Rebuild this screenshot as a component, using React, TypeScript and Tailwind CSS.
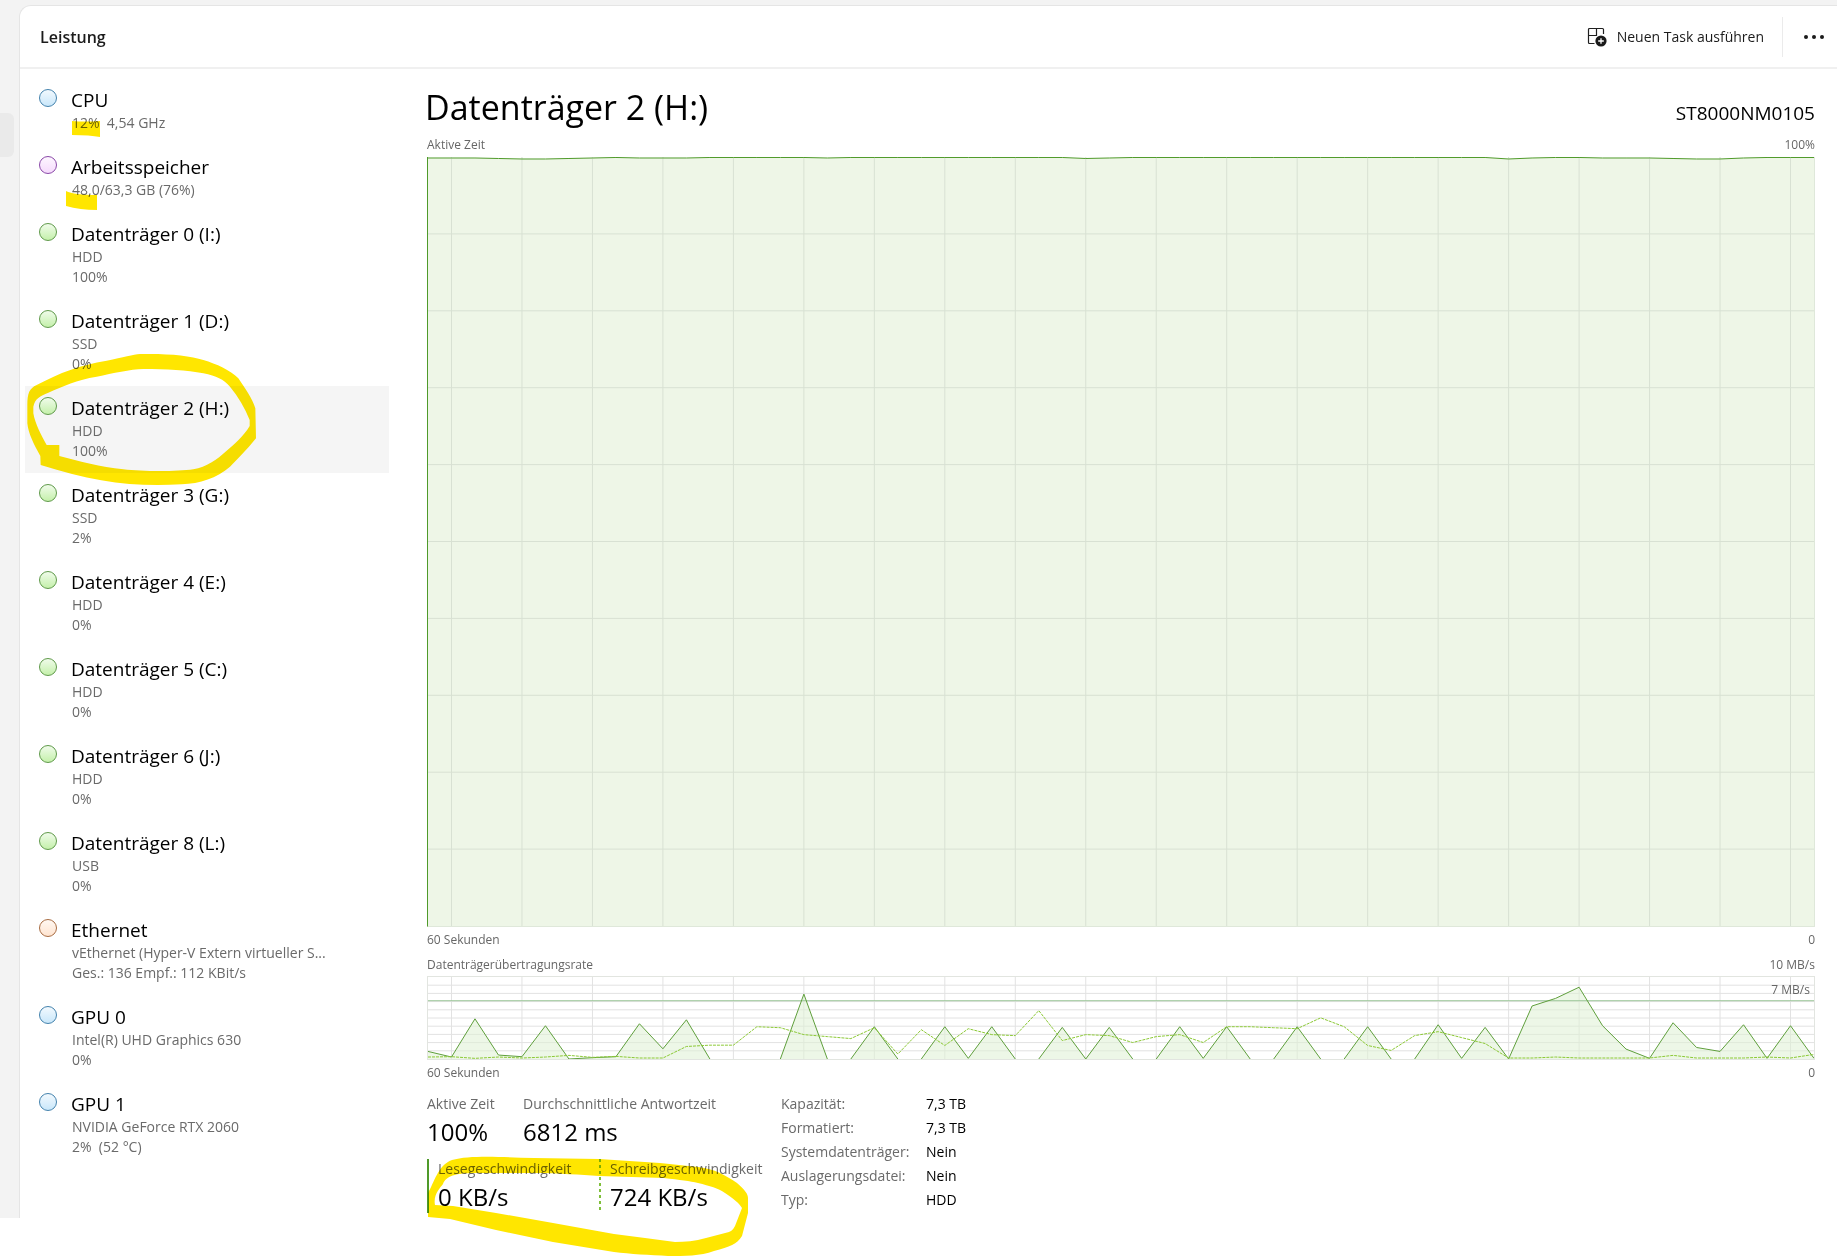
import clsx from 'clsx';

type Tone = 'blue' | 'purple' | 'green' | 'orange';

interface Resource {
  name: string;
  lines: string[];
  tone: Tone;
  selected?: boolean;
  mark?: 'cpu' | 'memory';
}

const resources: Resource[] = [
  { name: 'CPU', lines: ['12%  4,54 GHz'], tone: 'blue', mark: 'cpu' },
  { name: 'Arbeitsspeicher', lines: ['48,0/63,3 GB (76%)'], tone: 'purple', mark: 'memory' },
  { name: 'Datenträger 0 (I:)', lines: ['HDD', '100%'], tone: 'green' },
  { name: 'Datenträger 1 (D:)', lines: ['SSD', '0%'], tone: 'green' },
  { name: 'Datenträger 2 (H:)', lines: ['HDD', '100%'], tone: 'green', selected: true },
  { name: 'Datenträger 3 (G:)', lines: ['SSD', '2%'], tone: 'green' },
  { name: 'Datenträger 4 (E:)', lines: ['HDD', '0%'], tone: 'green' },
  { name: 'Datenträger 5 (C:)', lines: ['HDD', '0%'], tone: 'green' },
  { name: 'Datenträger 6 (J:)', lines: ['HDD', '0%'], tone: 'green' },
  { name: 'Datenträger 8 (L:)', lines: ['USB', '0%'], tone: 'green' },
  {
    name: 'Ethernet',
    lines: ['vEthernet (Hyper-V Extern virtueller S...', 'Ges.: 136 Empf.: 112 KBit/s'],
    tone: 'orange',
  },
  { name: 'GPU 0', lines: ['Intel(R) UHD Graphics 630', '0%'], tone: 'blue' },
  { name: 'GPU 1', lines: ['NVIDIA GeForce RTX 2060', '2%  (52 °C)'], tone: 'blue' },
];

const dotTones: Record<Tone, string> = {
  blue: 'border-[#4382ad] from-[#f2f9fe] to-[#c9e7fa]',
  purple: 'border-[#8a48a8] from-[#fdf6ff] to-[#f5dafc]',
  green: 'border-[#5f9a4a] from-[#f0fbea] to-[#c4f0aa]',
  orange: 'border-[#a86c42] from-[#fff8f2] to-[#ffe4d0]',
};

const details = [
  ['Kapazität:', '7,3 TB'],
  ['Formatiert:', '7,3 TB'],
  ['Systemdatenträger:', 'Nein'],
  ['Auslagerungsdatei:', 'Nein'],
  ['Typ:', 'HDD'],
];

// one sample per second, last 60 seconds
const LAST = 59;
const SCALE = 249;

const activeTime = [
  1, 1, 1, 1.5, 2, 2, 1.5, 1, 0.5, 1, 1, 1, 0.5, 0.5, 0.5, 0.5, 0.5, 1, 0.5, 0.5,
  0.5, 0.5, 0.5, 0.5, 0.5, 0.5, 0.5, 0.5, 1.5, 1, 0.5, 0.5, 0.5, 0.5, 0.5, 0.5, 0.5, 0.5, 0.5, 0.5,
  0.5, 0.5, 0.5, 0.5, 0.5, 0.5, 2, 1, 0.5, 0.5, 1, 1, 1, 1.5, 2, 2, 1, 0.5, 0.5, 0.5,
];

const readRate = [
  23, 6, 122, 12, 7, 101, 0, 4, 7, 107, 31, 119, 0, 0, 0, 0, 197, 0, 0, 98,
  0, 0, 98, 2, 98, 0, 0, 96, 0, 96, 0, 0, 98, 2, 98, 0, 0, 98, 0, 0,
  98, 0, 0, 104, 2, 96, 0, 161, 184, 218, 101, 30, 2, 110, 35, 23, 104, 2, 101, 2,
];

const writeRate = [
  6, 7, 2, 6, 3, 6, 11, 5, 8, 3, 3, 38, 42, 42, 98, 95, 74, 68, 62, 95,
  15, 89, 41, 92, 74, 71, 147, 56, 74, 71, 50, 68, 74, 50, 98, 98, 95, 92, 125, 98,
  41, 26, 71, 83, 65, 47, 3, 3, 6, 3, 3, 3, 3, 11, 3, 3, 3, 6, 3, 14,
];

const columns = Array.from({ length: 20 }, (_, i) => 1 + i * 3);
const rows = Array.from({ length: 9 }, (_, i) => i + 1);

// skips the stretches where the rate stays at zero
function linePath(values: number[]) {
  return values
    .slice(1)
    .map((v, i) => (v || values[i] ? `M${i} ${SCALE - values[i]}L${i + 1} ${SCALE - v}` : ''))
    .join('');
}

function Grid({ height, className }: { height: number; className: string }) {
  return (
    <g className={className}>
      {columns.map((x) => (
        <line key={x} x1={x} x2={x} y1={0} y2={height} vectorEffect="non-scaling-stroke" />
      ))}
      {rows.map((r) => (
        <line key={r} x1={0} x2={LAST} y1={(r * height) / 10} y2={(r * height) / 10} vectorEffect="non-scaling-stroke" />
      ))}
    </g>
  );
}

function ActiveTimeChart() {
  const points = activeTime.map((v, i) => `${i},${v}`).join(' ');
  return (
    <svg
      viewBox="0 0 59 770"
      preserveAspectRatio="none"
      className="block h-[770px] w-full border-r border-b border-l border-r-[#dfe8da] border-b-[#dfe8da] border-l-[#4f9a2a]"
    >
      <polygon points={`0,770 ${points} 59,770`} className="fill-[#eef6e7]" />
      <Grid height={770} className="stroke-[#d8e1d3]" />
      <polyline points={points} className="fill-none stroke-[#4f9a2a]" vectorEffect="non-scaling-stroke" />
    </svg>
  );
}

function TransferChart() {
  return (
    <div className="relative">
      <svg
        viewBox="0 0 59 249"
        preserveAspectRatio="none"
        className="block h-[84px] w-full border border-[#e2e5e0]"
      >
        <Grid height={SCALE} className="stroke-[#e2e2e2]" />
        <polygon
          points={`0,249 ${readRate.map((v, i) => `${i},${SCALE - v}`).join(' ')} 59,249`}
          className="fill-[#dff0d4]/55"
        />
        <line x1={0} x2={59} y1={72} y2={72} className="stroke-[#9cc79a]" vectorEffect="non-scaling-stroke" />
        <path d={linePath(readRate)} className="fill-none stroke-[#5f9f3c]" vectorEffect="non-scaling-stroke" />
        <path
          d={`M${writeRate.map((v, i) => `${i} ${SCALE - v}`).join('L')}`}
          className="fill-none stroke-[#8cc936]"
          strokeDasharray="3 1"
          vectorEffect="non-scaling-stroke"
        />
      </svg>
      <span className="absolute top-[5px] right-[5px] text-xs leading-[18px] text-[#666666]">7 MB/s</span>
    </div>
  );
}

function ChartCaption({ left, right }: { left: string; right: string }) {
  return (
    <div className="flex justify-between text-xs leading-[18px] text-[#666666]">
      <span>{left}</span>
      <span>{right}</span>
    </div>
  );
}

function Marker({ viewBox, d, className }: { viewBox: string; d: string; className: string }) {
  return (
    <svg
      viewBox={viewBox}
      className={clsx('pointer-events-none absolute overflow-visible mix-blend-multiply', className)}
      aria-hidden="true"
    >
      <path d={d} fillRule="evenodd" className="fill-[#ffe600]" />
    </svg>
  );
}

function ResourceRow({ name, lines, tone, selected, mark }: Resource) {
  return (
    <li className="relative">
      <button
        type="button"
        className={clsx('flex w-full gap-[14px] pt-[10px] pb-3 pl-[14px] text-left', selected && 'bg-[#f5f5f5]')}
      >
        <span className={clsx('mt-px size-[18px] shrink-0 rounded-full border bg-linear-to-b', dotTones[tone])} />
        <span className="min-w-0">
          <span className="block text-[19px] leading-[25px] text-black">{name}</span>
          {lines.map((line) => (
            <span key={line} className="block pl-px text-sm leading-5 whitespace-pre text-[#6a6a6a]">
              {line}
            </span>
          ))}
        </span>
      </button>
      {mark === 'cpu' && (
        <Marker
          viewBox="0 0 28 17"
          className="top-[42px] left-[47px] h-[17px] w-[28px]"
          d="M0 1Q13 2 28 1V17Q18 15 0 15Z"
        />
      )}
      {mark === 'memory' && (
        <Marker
          viewBox="0 0 32 19"
          className="top-[46px] left-[41px] h-[19px] w-8"
          d="M0 0Q8 4 31 4V19Q14 19 0 15Z"
        />
      )}
      {selected && (
        <Marker
          viewBox="75 288 720 261"
          className="top-0 left-0 h-[87px] w-[240px]"
          d="M82 345C82 310 88 295 110 285C180 248 240 225 320 212C370 202 400 193 420 192C500 190 570 196 610 210C650 222 690 240 715 265C735 295 757 325 766 355L768 445C740 480 710 510 690 530C650 565 600 580 545 583C400 592 280 575 122 525L121 498C100 460 85 430 82 400ZM100 350C105 325 120 318 145 308C190 288 230 270 290 260C340 250 390 238 430 237C500 237 560 240 610 250C650 258 670 268 690 290C715 320 735 355 749 390V408C730 440 700 465 680 482C650 510 620 530 580 538C530 545 430 545 370 538C300 530 240 515 178 498V465L140 465C125 440 105 400 100 370Z"
        />
      )}
    </li>
  );
}

function Stat({ label, value }: { label: string; value: string }) {
  return (
    <div>
      <dt className="text-sm leading-5 whitespace-nowrap text-[#6a6a6a]">{label}</dt>
      <dd className="mt-[2px] text-2xl leading-8 whitespace-nowrap text-black">{value}</dd>
    </div>
  );
}

function NewTaskIcon() {
  return (
    <svg viewBox="0 0 20 20" className="size-5" fill="none" aria-hidden="true">
      <path
        d="M7.5 16.5H2.5A1 1 0 0 1 1.5 15.5V2.5A1 1 0 0 1 2.5 1.5H15.5A1 1 0 0 1 16.5 2.5V7M1.5 8.5H9.5V1.5"
        stroke="#1f1f1f"
        strokeWidth="1.2"
      />
      <circle cx="14" cy="14" r="5.6" fill="#1a1a1a" />
      <path d="M14 11.2V16.8M11.2 14H16.8" stroke="#fff" strokeWidth="1.3" />
    </svg>
  );
}

export default function App() {
  return (
    <div className="min-h-screen overflow-hidden bg-white font-['Open_Sans','Noto_Sans',sans-serif]">
      <div className="flex bg-[#f3f3f3] pt-[5px]">
        <div className="w-[19px] shrink-0 pt-[108px]">
          <button type="button" aria-label="Leistung" className="block h-11 w-[14px] rounded-r-md bg-[#eaeaea]" />
        </div>

        <div className="min-w-0 flex-1 rounded-tl-xl border-t border-l border-[#e5e5e5] bg-white">
          <header className="flex h-[63px] items-center border-b-2 border-[#f0f0f0] pl-5">
            <h1 className="text-base font-semibold text-[#1b1b1b]">Leistung</h1>
            <button type="button" className="ml-auto flex items-center gap-[10px] text-sm text-[#1b1b1b]">
              <NewTaskIcon />
              Neuen Task ausführen
            </button>
            <span className="ml-[18px] h-10 w-px bg-[#ebebeb]" />
            <button type="button" aria-label="Mehr" className="mr-[13px] ml-[21px] flex gap-1">
              <span className="size-1 rounded-full bg-[#1b1b1b]" />
              <span className="size-1 rounded-full bg-[#1b1b1b]" />
              <span className="size-1 rounded-full bg-[#1b1b1b]" />
            </button>
          </header>

          <div className="flex pb-[5px]">
            <nav className="w-[369px] shrink-0 pt-[9px] pl-[5px]">
              <ul>
                {resources.map((resource) => (
                  <ResourceRow key={resource.name} {...resource} />
                ))}
              </ul>
            </nav>

            <main className="min-w-0 flex-1 pt-[15px] pr-[22px] pl-[38px]">
              <div className="-ml-0.5 flex items-end justify-between text-black">
                <h2 className="text-[34px] leading-[46px]">Datenträger 2 (H:)</h2>
                <span className="text-[19px] leading-[34px]">ST8000NM0105</span>
              </div>

              <div className="pt-[6px]">
                <ChartCaption left="Aktive Zeit" right="100%" />
              </div>
              <div className="pt-[3px]">
                <ActiveTimeChart />
              </div>
              <div className="pt-1 pb-[7px]">
                <ChartCaption left="60 Sekunden" right="0" />
              </div>
              <ChartCaption left="Datenträgerübertragungsrate" right="10 MB/s" />
              <div className="pt-[2px] pb-1">
                <TransferChart />
              </div>
              <ChartCaption left="60 Sekunden" right="0" />

              <div className="flex pt-[10px]">
                <div className="w-[354px] pt-[2px]">
                  <dl className="flex gap-[25px]">
                    <div className="w-[71px]">
                      <Stat label="Aktive Zeit" value="100%" />
                    </div>
                    <Stat label="Durchschnittliche Antwortzeit" value="6812 ms" />
                  </dl>
                  <dl className="relative mt-[11px] flex">
                    <div className="w-[172px] border-l-2 border-[#4f9a2a] pl-[9px]">
                      <Stat label="Lesegeschwindigkeit" value="0 KB/s" />
                    </div>
                    <div className="flex gap-[9px]">
                      <span className="w-0.5 bg-[repeating-linear-gradient(to_bottom,#7fbf3a_0_3px,transparent_3px_6px)]" />
                      <Stat label="Schreibgeschwindigkeit" value="724 KB/s" />
                    </div>
                    <Marker
                      viewBox="427 1157 322 99"
                      className="top-[-2px] left-0 h-[99px] w-[322px]"
                      d="M428 1217V1193C434 1183 438 1165 452 1160C470 1155 500 1157 534 1158L599 1159L660 1163L698 1167C715 1169 725 1175 737 1183C745 1190 748 1194 748 1198V1213L742 1236C737 1244 730 1247 714 1251C700 1256 685 1256 668 1256C650 1255 630 1254 614 1252L553 1242L496 1230L450 1219ZM435 1205C433 1195 440 1188 443 1184C446 1176 455 1173 476 1173H534C560 1173 580 1175 599 1176L664 1178C680 1180 690 1181 698 1183C710 1186 718 1188 725 1193C733 1198 740 1204 742 1208L735 1226C733 1230 731 1231 729 1232L706 1238C695 1241 685 1242 675 1242L645 1238L614 1234L553 1223L496 1213L453 1206Z"
                    />
                  </dl>
                </div>

                <table className="self-start text-left text-sm leading-6">
                  <tbody>
                    {details.map(([label, value]) => (
                      <tr key={label}>
                        <th scope="row" className="w-[145px] p-0 font-normal whitespace-nowrap text-[#6a6a6a]">
                          {label}
                        </th>
                        <td className="p-0 text-black">{value}</td>
                      </tr>
                    ))}
                  </tbody>
                </table>
              </div>
            </main>
          </div>
        </div>
      </div>
    </div>
  );
}
